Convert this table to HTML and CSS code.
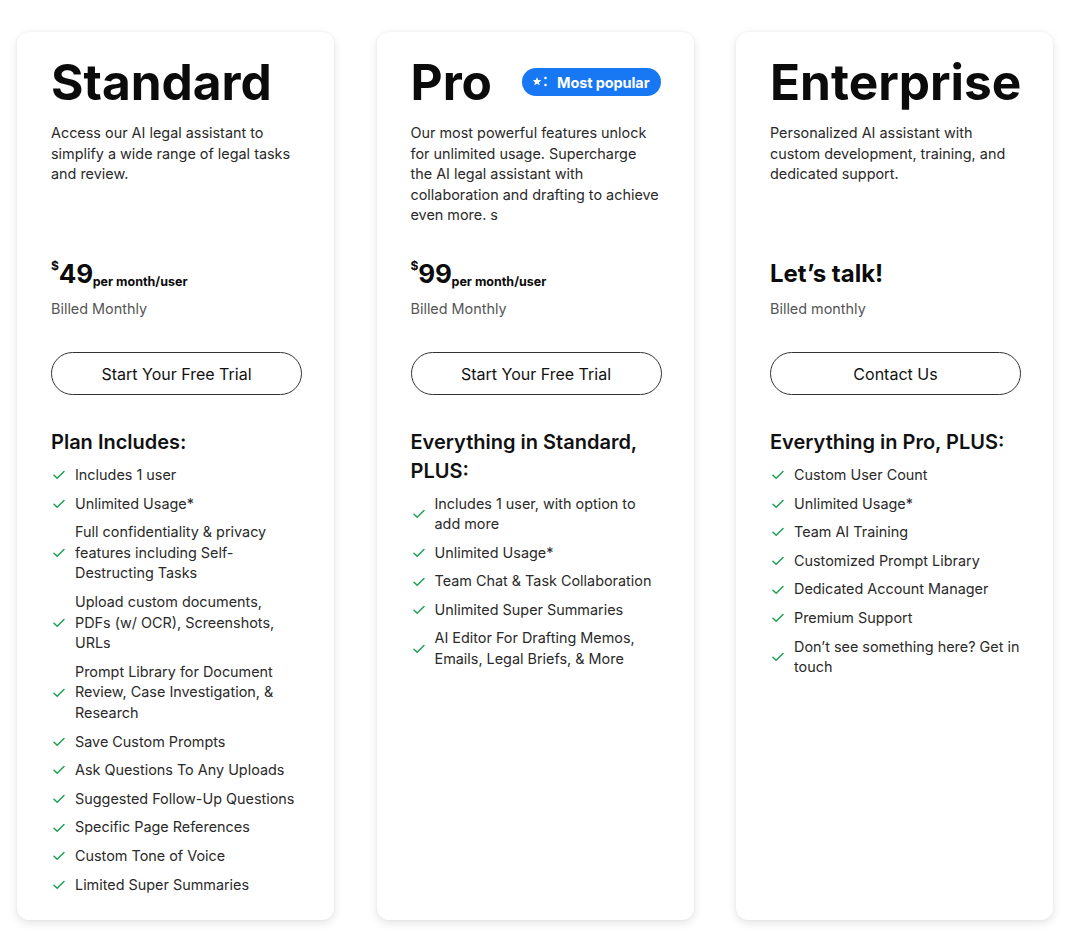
FILE: index.html
```html
<!DOCTYPE html>
<html lang="en">
<head>
<meta charset="utf-8">
<title>Pricing</title>
<link rel="stylesheet" href="styles.css">
</head>
<body>
<main class="plans">
  <section class="card">
    <div class="title-row"><h2 class="title">Standard</h2></div>
    <p class="desc">Access our AI legal assistant to simplify a wide range of legal tasks and review.</p>
    <div class="price"><sup class="cur">$</sup><span class="amount">49</span><span class="per">per month/user</span></div>
    <p class="billed">Billed Monthly</p>
    <a class="btn" href="#">Start Your Free Trial</a>
    <h3 class="inc">Plan Includes:</h3>
    <ul class="features">
      <li><svg class="check" viewBox="0 0 12 10"><path d="M1 5.2l3.2 3L11 1.5"/></svg><span>Includes 1 user</span></li>
      <li><svg class="check" viewBox="0 0 12 10"><path d="M1 5.2l3.2 3L11 1.5"/></svg><span>Unlimited Usage*</span></li>
      <li><svg class="check" viewBox="0 0 12 10"><path d="M1 5.2l3.2 3L11 1.5"/></svg><span>Full confidentiality &amp; privacy features including Self-Destructing Tasks</span></li>
      <li><svg class="check" viewBox="0 0 12 10"><path d="M1 5.2l3.2 3L11 1.5"/></svg><span>Upload custom documents, PDFs (w/ OCR), Screenshots, URLs</span></li>
      <li><svg class="check" viewBox="0 0 12 10"><path d="M1 5.2l3.2 3L11 1.5"/></svg><span>Prompt Library for Document Review, Case Investigation, &amp; Research</span></li>
      <li><svg class="check" viewBox="0 0 12 10"><path d="M1 5.2l3.2 3L11 1.5"/></svg><span>Save Custom Prompts</span></li>
      <li><svg class="check" viewBox="0 0 12 10"><path d="M1 5.2l3.2 3L11 1.5"/></svg><span>Ask Questions To Any Uploads</span></li>
      <li><svg class="check" viewBox="0 0 12 10"><path d="M1 5.2l3.2 3L11 1.5"/></svg><span>Suggested Follow-Up Questions</span></li>
      <li><svg class="check" viewBox="0 0 12 10"><path d="M1 5.2l3.2 3L11 1.5"/></svg><span>Specific Page References</span></li>
      <li><svg class="check" viewBox="0 0 12 10"><path d="M1 5.2l3.2 3L11 1.5"/></svg><span>Custom Tone of Voice</span></li>
      <li><svg class="check" viewBox="0 0 12 10"><path d="M1 5.2l3.2 3L11 1.5"/></svg><span>Limited Super Summaries</span></li>
    </ul>
  </section>

  <section class="card">
    <div class="title-row">
      <h2 class="title">Pro</h2>
      <span class="badge"><svg class="stars" viewBox="0 0 20 14"><path d="M6 2.2l1.25 2.75 3 .3-2.25 2 .65 2.950L6 8.7 3.35 10.2 4 7.25l-2.25-2 3-.3z"/><circle cx="14.5" cy="3" r="1.3"/><circle cx="14.5" cy="10" r="1.3"/></svg>Most popular</span>
    </div>
    <p class="desc">Our most powerful features unlock for unlimited usage. Supercharge the AI legal assistant with collaboration and drafting to achieve even more. s</p>
    <div class="price"><sup class="cur">$</sup><span class="amount">99</span><span class="per">per month/user</span></div>
    <p class="billed">Billed Monthly</p>
    <a class="btn" href="#">Start Your Free Trial</a>
    <h3 class="inc">Everything in Standard, PLUS:</h3>
    <ul class="features">
      <li><svg class="check" viewBox="0 0 12 10"><path d="M1 5.2l3.2 3L11 1.5"/></svg><span>Includes 1 user, with option to add more</span></li>
      <li><svg class="check" viewBox="0 0 12 10"><path d="M1 5.2l3.2 3L11 1.5"/></svg><span>Unlimited Usage*</span></li>
      <li><svg class="check" viewBox="0 0 12 10"><path d="M1 5.2l3.2 3L11 1.5"/></svg><span>Team Chat &amp; Task Collaboration</span></li>
      <li><svg class="check" viewBox="0 0 12 10"><path d="M1 5.2l3.2 3L11 1.5"/></svg><span>Unlimited Super Summaries</span></li>
      <li><svg class="check" viewBox="0 0 12 10"><path d="M1 5.2l3.2 3L11 1.5"/></svg><span>AI Editor For Drafting Memos, Emails, Legal Briefs, &amp; More</span></li>
    </ul>
  </section>

  <section class="card">
    <div class="title-row"><h2 class="title">Enterprise</h2></div>
    <p class="desc">Personalized AI assistant with custom development, training, and dedicated support.</p>
    <div class="price talk">Let’s talk!</div>
    <p class="billed">Billed monthly</p>
    <a class="btn" href="#">Contact Us</a>
    <h3 class="inc">Everything in Pro, PLUS:</h3>
    <ul class="features">
      <li><svg class="check" viewBox="0 0 12 10"><path d="M1 5.2l3.2 3L11 1.5"/></svg><span>Custom User Count</span></li>
      <li><svg class="check" viewBox="0 0 12 10"><path d="M1 5.2l3.2 3L11 1.5"/></svg><span>Unlimited Usage*</span></li>
      <li><svg class="check" viewBox="0 0 12 10"><path d="M1 5.2l3.2 3L11 1.5"/></svg><span>Team AI Training</span></li>
      <li><svg class="check" viewBox="0 0 12 10"><path d="M1 5.2l3.2 3L11 1.5"/></svg><span>Customized Prompt Library</span></li>
      <li><svg class="check" viewBox="0 0 12 10"><path d="M1 5.2l3.2 3L11 1.5"/></svg><span>Dedicated Account Manager</span></li>
      <li><svg class="check" viewBox="0 0 12 10"><path d="M1 5.2l3.2 3L11 1.5"/></svg><span>Premium Support</span></li>
      <li><svg class="check" viewBox="0 0 12 10"><path d="M1 5.2l3.2 3L11 1.5"/></svg><span>Don’t see something here? Get in touch</span></li>
    </ul>
  </section>
</main>
</body>
</html>
```

FILE: styles.css
```css
* { box-sizing: border-box; }
html, body { margin: 0; padding: 0; background: #ffffff; }
body {
  font-family: Inter, "Noto Sans", "Liberation Sans", sans-serif;
  color: #222;
  -webkit-font-smoothing: antialiased;
}
.plans {
  display: flex;
  gap: 42.5px;
  padding: 32px 0 13px 17px;
  align-items: stretch;
}
.card {
  width: 317px;
  min-height: 888px;
  background: #fff;
  border-radius: 12px;
  box-shadow: 0 3px 10px rgba(0,0,0,0.11), 0 0 3px rgba(0,0,0,0.05);
  padding: 22px 32px 20px 34px;
  display: flex;
  flex-direction: column;
}
.title-row {
  display: flex;
  align-items: center;
  justify-content: space-between;
  height: 56px;
}
.title {
  margin: 0;
  font-size: 49.6px;
  font-weight: 700;
  letter-spacing: 0;
  color: #0b0b0b;
  line-height: 56px;
}
.badge {
  display: inline-flex;
  align-items: center;
  gap: 6px;
  height: 28px;
  margin-right: 1px;
  padding: 0 11px 0 9px;
  border-radius: 14px;
  background: #1877f2;
  color: #fff;
  font-size: 14.5px;
  font-weight: 700;
  letter-spacing: -0.1px;
}
.stars { width: 20px; height: 14px; fill: #fff; }
.desc {
  margin: 13px 0 0;
  font-size: 14.4px;
  line-height: 20.6px;
  color: #2a2a2a;
  height: 134px;
}
.price {
  display: flex;
  align-items: baseline;
  color: #0b0b0b;
  height: 34px;
  margin-top: 0;
}
.cur {
  font-size: 12px;
  font-weight: 700;
  align-self: flex-start;
  margin-top: 3px;
  vertical-align: baseline;
  line-height: 1;
}
.amount {
  font-size: 26px;
  font-weight: 700;
  line-height: 34px;
  letter-spacing: -0.3px;
}
.per {
  font-size: 12.5px;
  font-weight: 700;
  position: relative;
  top: 3px;
}
.talk {
  font-size: 24px;
  font-weight: 700;
  line-height: 34px;
}
.billed {
  margin: 8px 0 0;
  font-size: 14.4px;
  line-height: 20px;
  color: #555;
}
.btn {
  display: flex;
  align-items: center;
  justify-content: center;
  margin-top: 33px;
  height: 43px;
  border: 1px solid #333;
  border-radius: 22px;
  color: #111;
  text-decoration: none;
  font-size: 16px;
  font-weight: 400;
}
.inc {
  margin: 33px 0 0;
  font-size: 20px;
  font-weight: 600;
  line-height: 28.5px;
  color: #111;
}
.features {
  list-style: none;
  margin: 8.5px 0 0;
  padding: 0 1.5px 0 0;
  display: flex;
  flex-direction: column;
  gap: 8px;
}
.features li {
  display: flex;
  align-items: center;
  gap: 10px;
  font-size: 14.4px;
  line-height: 20.6px;
  color: #2a2a2a;
}
.check {
  flex: none;
  width: 12px;
  height: 10px;
  margin-left: 2px;
  fill: none;
  stroke: #1e9e55;
  stroke-width: 1.5;
  stroke-linecap: round;
  stroke-linejoin: round;
}
```
